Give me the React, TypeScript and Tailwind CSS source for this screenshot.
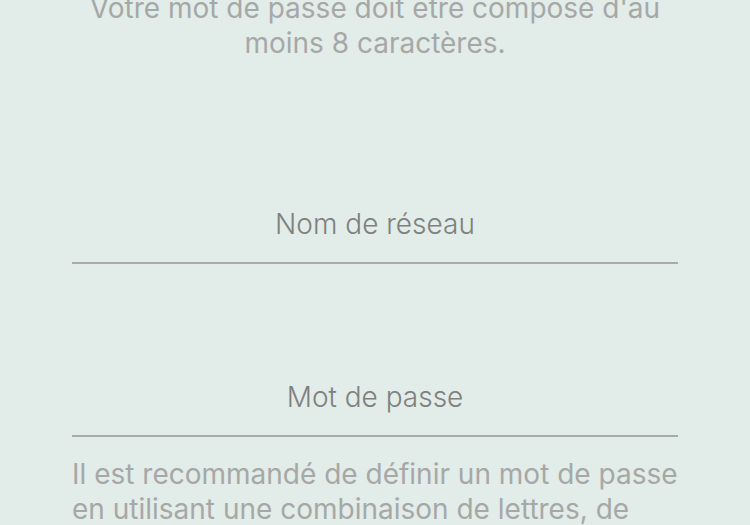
export default function App() {
  return (
    <div className="h-[525px] w-[750px] overflow-hidden bg-[#e2ece8] font-['Inter',sans-serif]">
      <div className="mx-[72px] mt-[-9px]">
        <p className="text-center text-[28px] leading-[35px] text-[#a6a8a7]">
          Votre mot de passe doit être composé d'au moins 8 caractères.
        </p>

        <div className="mt-[146px] border-b-2 border-[#a9abaa] pb-[20px] text-center">
          <span className="text-[28px] font-light leading-[35px] text-[#7e817f]">Nom de réseau</span>
        </div>

        <div className="mt-[116px] border-b-2 border-[#a9abaa] pb-[20px] text-center">
          <span className="text-[28px] font-light leading-[35px] text-[#7e817f]">Mot de passe</span>
        </div>

        <p className="mt-[20px] text-[28px] leading-[35px] text-[#a6a8a7]">
          Il est recommandé de définir un mot de passe en utilisant une combinaison de lettres, de chiffres et de symboles.
        </p>
      </div>
    </div>
  );
}
